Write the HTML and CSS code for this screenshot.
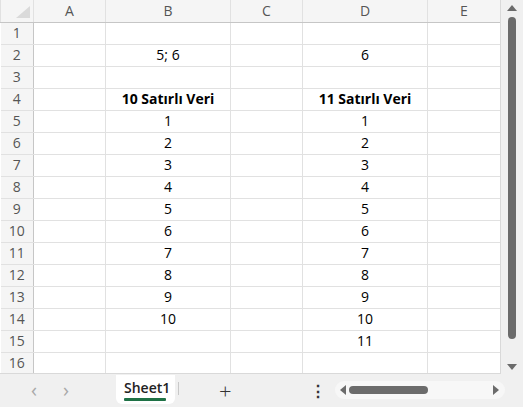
FILE: index.html
```html
<!DOCTYPE html>
<html lang="tr">
<head>
  <meta charset="UTF-8" />
  <title>Sheet1 - Excel</title>
  <link rel="stylesheet" href="styles.css">
</head>
<body>

  <div class="app">
    <div class="sheet-area">
      <div class="grid">
        <table class="cells">
          <colgroup>
            <col class="col-head">
            <col class="col-a">
            <col class="col-b">
            <col class="col-c">
            <col class="col-d">
            <col class="col-e">
          </colgroup>
          <thead>
            <tr>
              <th class="corner"><span class="corner-mark"></span></th>
              <th>A</th>
              <th>B</th>
              <th>C</th>
              <th>D</th>
              <th>E</th>
            </tr>
          </thead>
          <tbody>
            <tr><th>1</th><td></td><td></td><td></td><td></td><td></td></tr>
            <tr><th>2</th><td></td><td>5; 6</td><td></td><td>6</td><td></td></tr>
            <tr><th>3</th><td></td><td></td><td></td><td></td><td></td></tr>
            <tr><th>4</th><td></td><td class="bold">10 Satırlı Veri</td><td></td><td class="bold">11 Satırlı Veri</td><td></td></tr>
            <tr><th>5</th><td></td><td>1</td><td></td><td>1</td><td></td></tr>
            <tr><th>6</th><td></td><td>2</td><td></td><td>2</td><td></td></tr>
            <tr><th>7</th><td></td><td>3</td><td></td><td>3</td><td></td></tr>
            <tr><th>8</th><td></td><td>4</td><td></td><td>4</td><td></td></tr>
            <tr><th>9</th><td></td><td>5</td><td></td><td>5</td><td></td></tr>
            <tr><th>10</th><td></td><td>6</td><td></td><td>6</td><td></td></tr>
            <tr><th>11</th><td></td><td>7</td><td></td><td>7</td><td></td></tr>
            <tr><th>12</th><td></td><td>8</td><td></td><td>8</td><td></td></tr>
            <tr><th>13</th><td></td><td>9</td><td></td><td>9</td><td></td></tr>
            <tr><th>14</th><td></td><td>10</td><td></td><td>10</td><td></td></tr>
            <tr><th>15</th><td></td><td></td><td></td><td>11</td><td></td></tr>
            <tr><th>16</th><td></td><td></td><td></td><td></td><td></td></tr>
          </tbody>
        </table>
      </div>

      <div class="vscroll">
        <span class="arrow-up"></span>
        <span class="vthumb"></span>
        <span class="arrow-down"></span>
      </div>
    </div>

    <div class="tab-bar">
      <div class="nav">
        <span class="nav-btn">&lsaquo;</span>
        <span class="nav-btn">&rsaquo;</span>
      </div>
      <div class="tab active">Sheet1</div>
      <span class="tab-sep"></span>
      <span class="add-sheet">+</span>
      <span class="more">&#8942;</span>
      <div class="hscroll">
        <span class="arrow-left"></span>
        <span class="hthumb"></span>
        <span class="arrow-right"></span>
      </div>
    </div>
  </div>

</body>
</html>
```

FILE: styles.css
```css
* {
  box-sizing: border-box;
}
body {
  margin: 0;
  background-color: #f0f0f0;
  font-family: "Open Sans", "Noto Sans", sans-serif;
}
.app {
  width: 523px;
  height: 407px;
  display: flex;
  flex-direction: column;
}
.sheet-area {
  display: flex;
  height: 374px;
}
.grid {
  width: 501px;
  background-color: white;
  border-right: 1px solid #d9d9d9;
  border-bottom: 1px solid #d9d9d9;
  overflow: hidden;
}
.cells {
  border-collapse: collapse;
  table-layout: fixed;
  width: 500px;
}
.col-head { width: 33px; }
.col-a { width: 72px; }
.col-b { width: 125px; }
.col-c { width: 72px; }
.col-d { width: 125px; }
.col-e { width: 73px; }

.cells td,
.cells th {
  height: 22px;
  padding: 0;
  text-align: center;
  border: 1px solid #e1e1e1;
  font-size: 14px;
  line-height: 20px;
  white-space: nowrap;
}
.cells thead th {
  height: 22px;
  background-color: #f5f5f5;
  color: #555;
  font-weight: normal;
  border-top: none;
  border-bottom: 1px solid #c6c6c6;
}
.cells tbody th {
  background-color: #f5f5f5;
  color: #555;
  font-weight: normal;
  border-left: none;
  border-right: 1px solid #c6c6c6;
}
.cells td {
  color: #000;
}
.cells td.bold {
  font-weight: bold;
}
.corner {
  position: relative;
}
.corner-mark {
  position: absolute;
  right: 3px;
  bottom: 4px;
  width: 0;
  height: 0;
  border-left: 14px solid transparent;
  border-bottom: 12px solid #dadada;
}

/* vertical scrollbar */
.vscroll {
  width: 22px;
  display: flex;
  flex-direction: column;
  align-items: center;
  padding: 5px 0 0 0;
}
.arrow-up {
  width: 0;
  height: 0;
  border-left: 5px solid transparent;
  border-right: 5px solid transparent;
  border-bottom: 6px solid #6b6b6b;
  margin-bottom: 6px;
}
.vthumb {
  width: 8px;
  height: 322px;
  border-radius: 4px;
  background-color: #6b6b6b;
}
.arrow-down {
  width: 0;
  height: 0;
  border-left: 5px solid transparent;
  border-right: 5px solid transparent;
  border-top: 6px solid #6b6b6b;
  margin-top: 25px;
}

/* sheet tabs */
.tab-bar {
  flex: 1;
  display: flex;
  align-items: flex-start;
  position: relative;
}
.nav {
  display: flex;
  gap: 18px;
  padding: 5px 0 0 27px;
  width: 116px;
}
.nav-btn {
  color: #a8a8a8;
  font-size: 20px;
  line-height: 22px;
  width: 14px;
  text-align: center;
}
.tab {
  width: 59px;
  height: 29px;
  margin-top: 1px;
  background-color: white;
  border-radius: 0 0 6px 6px;
  padding: 3px 0 0 8px;
  font-size: 14px;
  font-weight: 600;
  color: #222;
  position: relative;
}
.tab.active::after {
  content: "";
  position: absolute;
  left: 8px;
  width: 42px;
  top: 23px;
  height: 3px;
  border-radius: 1px;
  background-color: #1e7145;
}
.tab-sep {
  width: 1px;
  height: 13px;
  margin: 8px 0 0 3px;
  background-color: #c8c8c8;
}
.add-sheet {
  margin: 2px 0 0 40px;
  font-size: 22px;
  line-height: 28px;
  color: #333;
  font-weight: 300;
}
.more {
  margin: 3px 0 0 78px;
  font-size: 16px;
  line-height: 28px;
  color: #333;
  font-weight: bold;
}
.hscroll {
  position: absolute;
  left: 335px;
  top: 7px;
  width: 170px;
  height: 18px;
  border-radius: 9px;
  background-color: #f7f7f7;
  display: flex;
  align-items: center;
  padding: 0 6px 0 5px;
}
.arrow-left {
  width: 0;
  height: 0;
  border-top: 5px solid transparent;
  border-bottom: 5px solid transparent;
  border-right: 6px solid #6b6b6b;
}
.hthumb {
  width: 79px;
  height: 8px;
  margin-left: 3px;
  border-radius: 4px;
  background-color: #6b6b6b;
}
.arrow-right {
  width: 0;
  height: 0;
  margin-left: auto;
  border-top: 5px solid transparent;
  border-bottom: 5px solid transparent;
  border-left: 6px solid #6b6b6b;
}
```
